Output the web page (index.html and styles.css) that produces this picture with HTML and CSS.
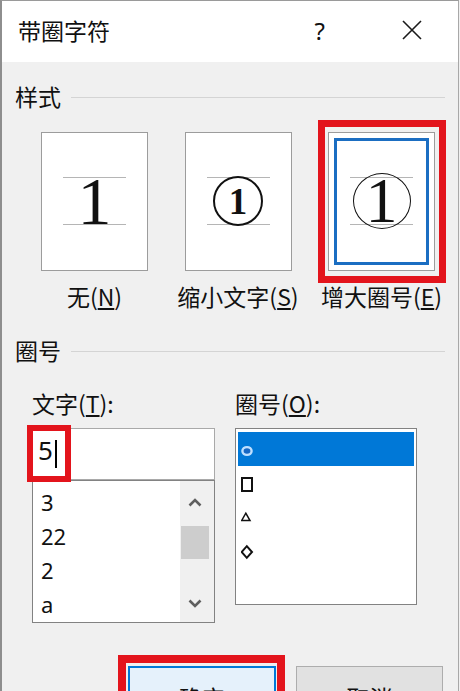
FILE: index.html
```html
<!DOCTYPE html>
<html lang="zh-CN">
<head>
<meta charset="utf-8">
<title>带圈字符</title>
<link rel="stylesheet" href="styles.css">
</head>
<body>
<div class="window">
  <div class="titlebar">
    <span class="title">带圈字符</span>
    <span class="help">?</span>
    <svg class="close" width="20" height="20" viewBox="0 0 20 20"><path d="M1 1L19 19M19 1L1 19" stroke="#1a1a1a" stroke-width="1.6" fill="none"/></svg>
  </div>
  <div class="content">
    <div class="group-head"><span>样式</span><i class="rule"></i></div>
    <div class="options">
      <div class="option">
        <div class="preview"><div class="stage"><span class="digit">1</span></div></div>
        <div class="opt-label">无(<u>N</u>)</div>
      </div>
      <div class="option">
        <div class="preview"><div class="stage"><span class="ring ring-s"><span class="digit">1</span></span></div></div>
        <div class="opt-label">缩小文字(<u>S</u>)</div>
      </div>
      <div class="option">
        <div class="preview selected">
          <div class="stage"><span class="ring ring-l"><span class="digit">1</span></span></div>
          <i class="mark mark-style"></i>
        </div>
        <div class="opt-label">增大圈号(<u>E</u>)</div>
      </div>
    </div>

    <div class="group-head group-2"><span>圈号</span><i class="rule"></i></div>
    <div class="pickers">
      <div class="picker">
        <div class="field-label">文字(<u>T</u>):</div>
        <div class="input"><span class="typed">5</span><i class="caret"></i><i class="mark mark-input"></i></div>
        <div class="listbox text-list">
          <ul class="items"><li>3</li><li>22</li><li>2</li><li>a</li></ul>
          <div class="scrollbar">
            <div class="sb-btn sb-up"><svg width="14" height="9" viewBox="0 0 14 9"><path d="M1.5 7.5L7 2L12.5 7.5" stroke="#5f5f5f" stroke-width="2.6" fill="none"/></svg></div>
            <div class="thumb"></div>
            <div class="sb-gap"></div>
            <div class="sb-btn sb-down"><svg width="14" height="9" viewBox="0 0 14 9"><path d="M1.5 1.5L7 7L12.5 1.5" stroke="#5f5f5f" stroke-width="2.6" fill="none"/></svg></div>
          </div>
        </div>
      </div>
      <div class="picker">
        <div class="field-label">圈号(<u>O</u>):</div>
        <ul class="listbox symbol-list">
          <li class="sel"><svg width="14" height="20" viewBox="0 0 14 20"><ellipse cx="6" cy="12" rx="4.6" ry="3.9" fill="#1667c4" stroke="#bfe0ff" stroke-width="2.4"/></svg></li>
          <li><svg width="14" height="20" viewBox="0 0 14 20"><rect x="1" y="5" width="10" height="13" fill="none" stroke="#111" stroke-width="2"/></svg></li>
          <li><svg width="14" height="20" viewBox="0 0 14 20"><polygon points="4.8,6.2 9,13.6 0.6,13.6" fill="none" stroke="#111" stroke-width="1.5"/></svg></li>
          <li><svg width="14" height="20" viewBox="0 0 14 20"><polygon points="5.8,5.2 11,11 5.8,16.8 0.6,11" fill="none" stroke="#111" stroke-width="2"/></svg></li>
        </ul>
      </div>
    </div>

    <div class="actions">
      <div class="btn btn-ok">确定<i class="mark mark-ok"></i></div>
      <div class="btn btn-cancel">取消</div>
    </div>
  </div>
</div>
</body>
</html>
```
FILE: styles.css
```css
* { box-sizing: border-box; }
html, body { margin: 0; padding: 0; }
body {
  width: 460px;
  height: 691px;
  overflow: hidden;
  background: #f0f0f0;
  font-family: "Noto Sans CJK SC", "Noto Sans", sans-serif;
  color: #111;
}
.window {
  width: 459px;
  height: 691px;
  border-left: 2px solid #8e8e8e;
  border-right: 1px solid #a8a8a8;
  border-top: 1px solid #9a9a9a;
  background: #f0f0f0;
  overflow: hidden;
}
.titlebar {
  height: 61px;
  background: #fff;
  display: flex;
  align-items: center;
  padding: 0 36px 3px 16px;
}
.title { font-size: 23px; flex: 1; }
.help {
  font-family: "Noto Sans", sans-serif;
  font-size: 24px;
  margin-right: 77px;
}
.close { display: block; }

.content { padding: 19px 13px 0 13px; }

.group-head {
  display: flex;
  align-items: center;
  gap: 10px;
  height: 30px;
  font-size: 23px;
  line-height: 30px;
}
.rule {
  flex: 1;
  height: 1px;
  background: #d4d4d4;
  margin-top: 2px;
}
.group-2 { margin-top: 24px; }

.options {
  display: grid;
  grid-template-columns: repeat(3, 107px);
  column-gap: 36.5px;
  margin: 21px 0 0 26px;
}
.option {
  display: flex;
  flex-direction: column;
  align-items: center;
}
.preview {
  position: relative;
  width: 107px;
  height: 139px;
  background: #fff;
  border: 1px solid #9c9c9c;
  display: flex;
  flex-direction: column;
  align-items: center;
  padding-top: 44px;
}
.preview.selected {
  box-shadow: inset 0 0 0 5px #fff, inset 0 0 0 8px #1b6ec2;
}
.stage {
  width: 63px;
  height: 48px;
  flex-shrink: 0;
  border-top: 1px solid #b5b5b5;
  border-bottom: 1px solid #b5b5b5;
  display: flex;
  align-items: center;
  justify-content: center;
}
.digit {
  font-family: "Liberation Serif", serif;
  font-size: 68px;
  line-height: 1;
}
.ring {
  flex-shrink: 0;
  border: 2px solid #111;
  border-radius: 50%;
  display: flex;
  align-items: center;
  justify-content: center;
}
.ring-s { width: 50px; height: 50px; }
.ring-s .digit { font-size: 37px; font-weight: bold; }
.ring-l { width: 58px; height: 56px; border-width: 1.6px; }
.ring-l .digit { font-size: 64px; }

.opt-label {
  margin-top: 10px;
  font-size: 23px;
  line-height: 30px;
  white-space: nowrap;
}

.mark {
  position: absolute;
  border: 7px solid #e3141c;
  pointer-events: none;
}
.mark-style { left: -11px; top: -13px; width: 128px; height: 163px; }
.mark-input { left: -6px; top: -4px; width: 44px; height: 57px; border-width: 6px; }
.mark-ok { left: -12px; top: -13px; width: 167px; height: 100px; border-width: 8px; }

.pickers {
  display: grid;
  grid-template-columns: 183px 182px;
  column-gap: 20px;
  margin: 23px 0 0 17px;
}
.field-label {
  font-size: 23px;
  line-height: 30px;
  margin-bottom: 10px;
}
.input {
  position: relative;
  height: 52px;
  background: #fff;
  border: 1px solid #a9a9a9;
  display: flex;
  align-items: center;
  padding-left: 5px;
}
.typed {
  font-family: "Noto Sans", sans-serif;
  font-size: 26px;
  line-height: 1;
  margin-bottom: 8px;
}
.caret {
  width: 2px;
  height: 28px;
  background: #000;
  margin-left: 2px;
}
.listbox {
  background: #fff;
  border: 1px solid #828282;
}
.text-list {
  height: 143px;
  display: flex;
}
.items {
  list-style: none;
  margin: 0;
  padding: 4px 0 0 8px;
  flex: 1;
  font-family: "Noto Sans", sans-serif;
  font-size: 22px;
  line-height: 34px;
}
.scrollbar {
  width: 34px;
  background: #f0f0f0;
  display: flex;
  flex-direction: column;
}
.sb-btn {
  display: flex;
  align-items: center;
  justify-content: center;
  padding-right: 4px;
}
.sb-up { height: 43px; }
.sb-down { height: 38px; }
.thumb {
  height: 33px;
  margin: 2px 5px 0 1px;
  background: #cdcdcd;
}
.sb-gap { flex: 1; }

.symbol-list {
  height: 177px;
  list-style: none;
  margin: 0;
  padding: 3px 2px;
}
.symbol-list li {
  height: 34px;
  display: flex;
  align-items: center;
  padding-left: 3px;
}
.symbol-list li.sel { background: #0078d7; }

.actions {
  display: flex;
  justify-content: flex-end;
  gap: 20px;
  margin: 43px 2px 0 0;
}
.btn {
  position: relative;
  height: 62px;
  font-size: 23px;
  display: flex;
  align-items: center;
  justify-content: center;
}
.btn-ok {
  width: 148px;
  background: #e5f1fb;
  border: 2px solid #0078d7;
}
.btn-cancel {
  width: 147px;
  background: #e1e1e1;
  border: 1px solid #adadad;
}
```
